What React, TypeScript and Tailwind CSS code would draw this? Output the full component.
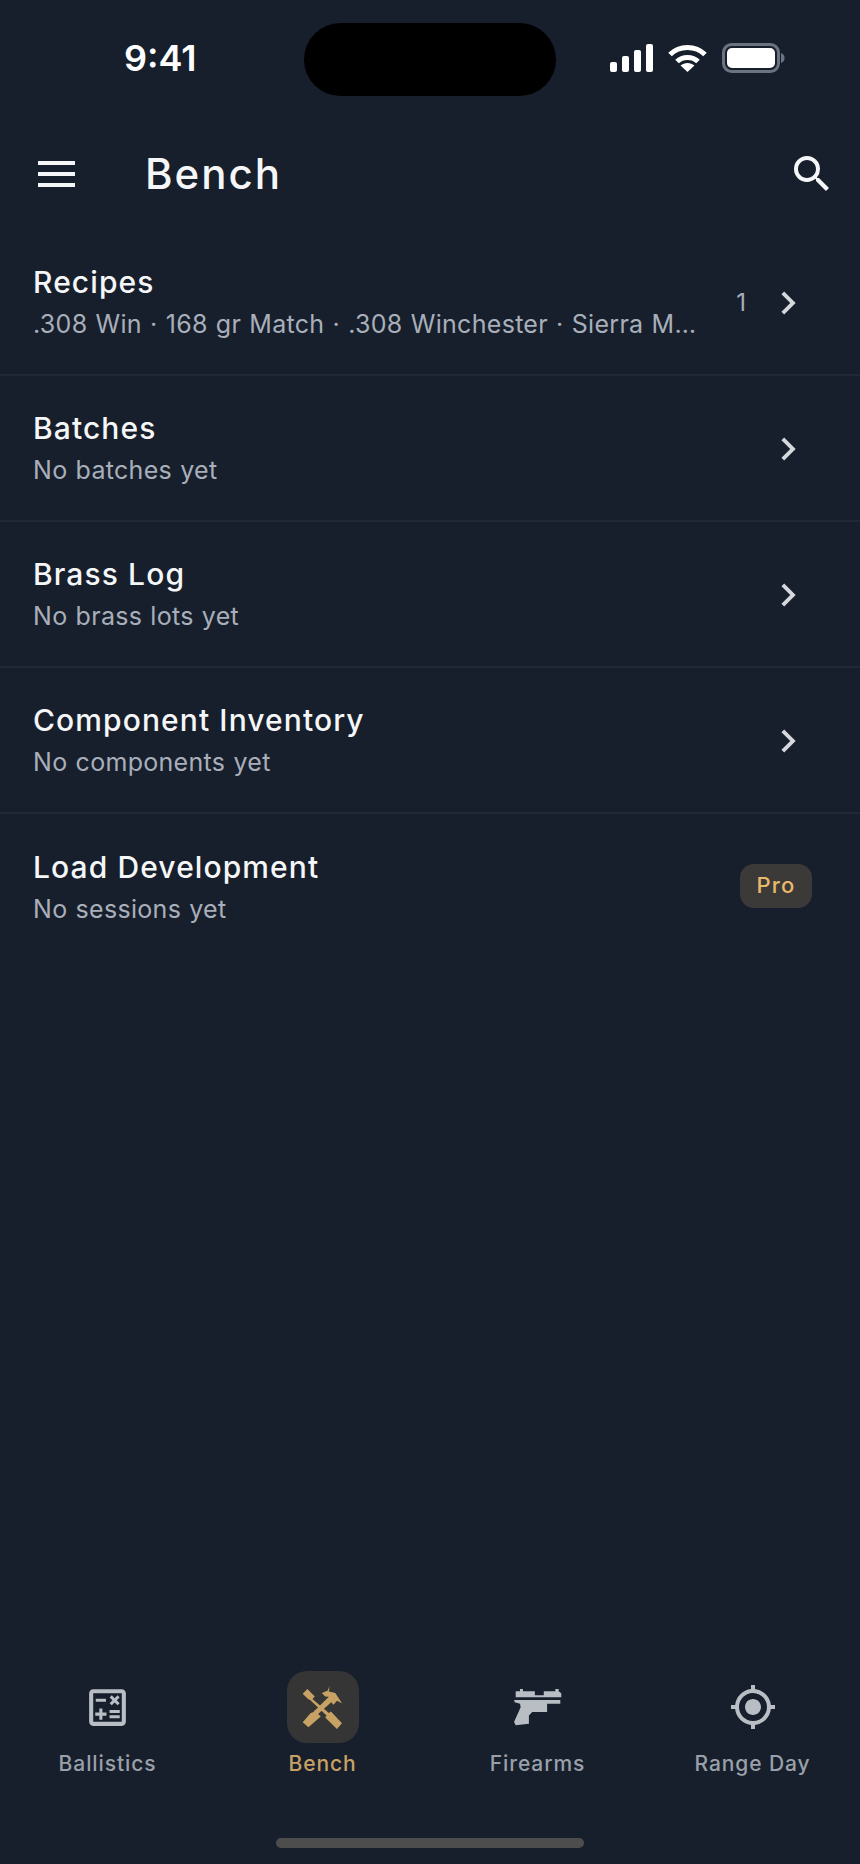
import { MdChevronRight, MdGpsFixed, MdOutlineCalculate, MdSearch } from 'react-icons/md';

const rows = [
  { title: 'Recipes', sub: '.308 Win · 168 gr Match · .308 Winchester · Sierra MatchKing', count: '1' },
  { title: 'Batches', sub: 'No batches yet' },
  { title: 'Brass Log', sub: 'No brass lots yet' },
  { title: 'Component Inventory', sub: 'No components yet' },
  { title: 'Load Development', sub: 'No sessions yet', pro: true },
];

const StatusIcons = () => (
  <div className="flex items-center">
    <svg width="43" height="28" viewBox="0 0 43 28" fill="#fff">
      <rect x="0" y="18" width="7" height="10" rx="2" />
      <rect x="12" y="12" width="7" height="16" rx="2" />
      <rect x="24" y="6" width="7" height="22" rx="2" />
      <rect x="36" y="0" width="7" height="28" rx="2" />
    </svg>
    <svg className="ml-[15px]" width="39" height="28" viewBox="0 0 39 28" fill="none" stroke="#fff" strokeWidth="5">
      <path d="M2 10.5C11.5 1 27.5 1 37 10.5" />
      <path d="M9 17.5C14.5 12 24.5 12 30 17.5" />
      <path d="M19.5 28L12.5 21.5C16.5 18 22.5 18 26.5 21.5Z" fill="#fff" stroke="none" />
    </svg>
    <svg className="ml-[15px]" width="63" height="30" viewBox="0 0 63 30" fill="none">
      <rect x="1.5" y="1.5" width="55" height="27" rx="8" stroke="#6b7280" strokeWidth="3" />
      <rect x="5" y="5" width="48" height="20" rx="5" fill="#fff" />
      <path d="M59 10C62 11 62.5 13 62.5 15C62.5 17 62 19 59 20Z" fill="#6b7280" />
    </svg>
  </div>
);

const HammerIcon = () => (
  <svg width="41" height="43" viewBox="96 74 122 128" fill="#c8a265">
    <path d="M98 97L112 83L134 105L127 113L176 154L182 150L215 185L200 202L165 168L169 162L120 116L114 113Z" />
    <path d="M132 146L152 165L115 197L98 182L122 154L129 152L176 106L165 105L155 95L172 88L178 75L176 90L195 95L215 125L200 118L190 130L183 122L139 162L132 158Z" />
  </svg>
);

const GunIcon = () => (
  <svg width="48" height="38" viewBox="70 52 145 115" fill="#b9bdc4">
    <path d="M75 62H88V55H97V62H133V74H160V62H195V55H205V62L213 68V80H75Z" />
    <path d="M70 88H210V100H170V125H125L115 135V160L75 165L70 155L90 110L88 100L72 95Z" />
  </svg>
);

const tabs = [
  { label: 'Ballistics', icon: <MdOutlineCalculate size={49} color="#b9bdc4" /> },
  { label: 'Bench', icon: <HammerIcon />, active: true },
  { label: 'Firearms', icon: <GunIcon /> },
  { label: 'Range Day', icon: <MdGpsFixed size={48} color="#b9bdc4" /> },
];

export default function App() {
  return (
    <div className="flex min-h-[1864px] flex-col bg-[#171f2c] font-['Inter',sans-serif] text-white">
      <div className="flex h-[116px] shrink-0 items-start">
        <div className="w-[304px] pt-[36px] pl-[124px] text-[36px] leading-[44px] font-semibold">9:41</div>
        <div className="mt-[23px] h-[73px] w-[252px] rounded-full bg-black" />
        <div className="pt-[43px] pl-[54px]">
          <StatusIcons />
        </div>
      </div>

      <header className="flex h-[114px] shrink-0 items-center pt-[2px] pr-[24px] pl-[38px]">
        <div className="flex w-[37px] flex-col gap-[7px]">
          <div className="h-[4px] bg-[#f5f6f7]" />
          <div className="h-[4px] bg-[#f5f6f7]" />
          <div className="h-[4px] bg-[#f5f6f7]" />
        </div>
        <h1 className="ml-[70px] flex-1 text-[42px] leading-[50px] font-medium tracking-[2px] text-[#f5f6f7]">Bench</h1>
        <MdSearch size={48} color="#f5f6f7" />
      </header>

      <main className="flex-1">
        {rows.map((row, i) => (
          <div
            key={row.title}
            className={`flex h-[146px] items-center pt-[2px] pr-[48px] pl-[33px] ${i < 4 ? 'border-b-2 border-[#1f2a36]' : ''}`}
          >
            <div className="min-w-0 flex-1">
              <div className="text-[30px] leading-[40px] font-medium tracking-[1.1px] text-[#f5f6f7]">{row.title}</div>
              <div className="mt-[2px] max-w-[666px] truncate text-[25px] leading-[40px] tracking-[0.3px] [word-spacing:0.8px] text-[#a9afba]">
                {row.sub}
              </div>
            </div>
            {row.count && <span className="mr-[19px] text-[24px] text-[#a9afba]">{row.count}</span>}
            {row.pro ? (
              <span className="-mt-[5px] flex h-[44px] w-[72px] items-center justify-center rounded-[14px] bg-[#3b3a38] text-[22px] font-medium tracking-[1.2px] text-[#e8b96a]">
                Pro
              </span>
            ) : (
              <MdChevronRight size={46} color="#d5d8dd" className="mr-[1px]" />
            )}
          </div>
        ))}
      </main>

      <nav className="grid shrink-0 grid-cols-4">
        {tabs.map(tab => (
          <div key={tab.label} className="flex flex-col items-center">
            <div
              className={`flex h-[72px] w-[72px] items-center justify-center rounded-[20px] ${tab.active ? 'bg-[#353535]' : ''}`}
            >
              {tab.icon}
            </div>
            <span
              className={`mt-[7px] text-[21px] leading-[28px] font-medium tracking-[0.9px] ${tab.active ? 'text-[#c8a265]' : 'text-[#9aa0aa]'}`}
            >
              {tab.label}
            </span>
          </div>
        ))}
      </nav>

      <div className="flex shrink-0 justify-center pt-[60px] pb-[16px]">
        <div className="h-[10px] w-[308px] rounded-full bg-[#4d4d4d]" />
      </div>
    </div>
  );
}
